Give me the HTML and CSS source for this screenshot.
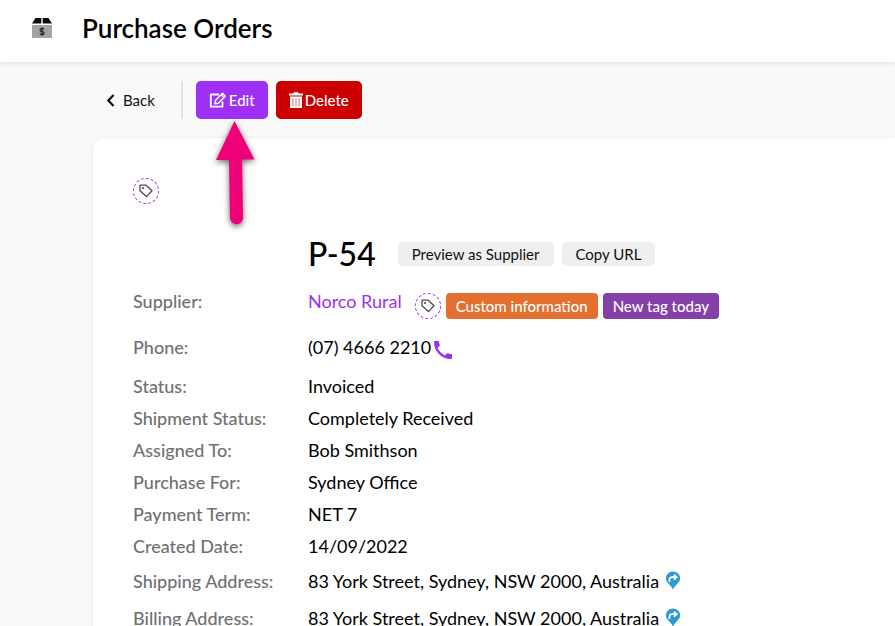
FILE: index.html
```html
<!DOCTYPE html>
<html lang="en">
<head>
<meta charset="utf-8">
<title>Purchase Orders</title>
<link rel="stylesheet" href="styles.css">
</head>
<body>
<svg class="defs" aria-hidden="true">
  <symbol id="tag" viewBox="0 0 14 14">
    <path d="M1 1.2h6.2l5.8 5.6-5.5 5.8L1 6.8z" fill="none" stroke="#4a4a55" stroke-width="1.3" stroke-linejoin="round"/>
    <circle cx="4" cy="4" r="1.1" fill="#4a4a55"/>
  </symbol>
  <symbol id="pin" viewBox="0 0 16 20">
    <path d="M8 .5a7.5 7.5 0 0 1 7.5 7.500c0 4-4.500 6-7.500 11.500C5 14 .5 12 .5 8A7.500 7.500 0 0 1 8 .5z" fill="#2f9ad2"/>
    <path d="M4.200 11.500V9.500Q4.200 6.500 7 6.500h4M9 3.800l2.900 2.700L9 9.200" fill="none" stroke="#fff" stroke-width="1.8"/>
  </symbol>
</svg>

<header class="topbar">
  <svg class="box-icon" viewBox="0 0 20 20" aria-hidden="true">
    <path d="M3.500 0H9.300V5.500H0zM10.700 0H16.500L20 5.500H10.700z" fill="#0b0b0b"/>
    <path d="M0 7h20v13H0z" fill="#a3a3a3"/>
    <path d="M12 11.500Q11.500 10.500 10 10.500 8 10.500 8 12t2 1.500 2 1.600-2 1.500q-1.600 0-2.100-1.100M10 9.300v8.500" fill="none" stroke="#161616" stroke-width="1.1"/>
  </svg>
  <h1 class="title">Purchase Orders</h1>
</header>

<main class="content">
  <nav class="toolbar">
    <a class="back" href="#">
      <svg class="chevron" viewBox="0 0 8 12" aria-hidden="true"><path d="M6.800 1L2 6l4.800 5" fill="none" stroke="#111" stroke-width="2"/></svg>
      Back
    </a>
    <button class="btn edit" type="button">
      <svg class="edit-icon" viewBox="0 0 18 16" aria-hidden="true">
        <path d="M10 2.500H1.800v12.200h11.700V9.500" fill="none" stroke="#fff" stroke-width="1.800" stroke-linejoin="round"/>
        <path d="M6.400 8.500L13.500 1.400l2.800 2.800-7.100 7.100-3.300.5z" fill="none" stroke="#fff" stroke-width="1.500" stroke-linejoin="round"/>
        <path d="M12.200 2.800l2.800 2.800" stroke="#fff" stroke-width="1.300"/>
      </svg>
      Edit
    </button>
    <button class="btn delete" type="button">
      <svg class="trash-icon" viewBox="0 0 14 16" aria-hidden="true">
        <path d="M4.500 1.500V.3h5v1.200H14v2H0v-2zM1 4.500h12V16H1z" fill="#fff"/>
        <path d="M4 6.500v7.500M7 6.500v7.500M10 6.500v7.500" stroke="#e06666" stroke-width="1"/>
      </svg>
      Delete
    </button>
    <svg class="arrow" viewBox="0 0 40 106" aria-hidden="true">
      <path d="M19.500 0L39.500 38.500H27L28 96.500a6.500 6.500 0 0 1-13 .5L14 39H1z" fill="#f00078"/>
    </svg>
  </nav>

  <section class="card">
    <button class="tag-add" type="button" aria-label="Add tag"><svg class="tag-icon"><use href="#tag"/></svg></button>
    <div class="heading">
      <h2 class="number">P-54</h2>
      <button class="small-btn" type="button">Preview as Supplier</button>
      <button class="small-btn" type="button">Copy URL</button>
    </div>
    <dl class="details">
      <div class="row supplier">
        <dt>Supplier:</dt>
        <dd>
          <a class="link" href="#">Norco Rural</a>
          <span class="tags">
            <button class="tag-add" type="button" aria-label="Add supplier tag"><svg class="tag-icon"><use href="#tag"/></svg></button>
            <span class="tag orange">Custom information</span>
            <span class="tag purple">New tag today</span>
          </span>
        </dd>
      </div>
      <div class="row phone">
        <dt>Phone:</dt>
        <dd>(07) 4666 2210
          <a class="call" href="#" aria-label="Call"><svg class="phone-icon" viewBox="0 0 18 18" aria-hidden="true"><path d="M1 0h3.200q.8 0 .9.900.1 1.700.7 3.200.2.600-.2 1L3.500 7.200q2.400 4.800 7.300 7.300l2.100-2.100q.4-.4 1-.2 1.500.6 3.200.7.900.1.900.9V17q0 1-1 1C7.500 18 0 10.500 0 1q0-1 1-1z" fill="#9b30f5"/></svg></a>
        </dd>
      </div>
      <div class="row"><dt>Status:</dt><dd>Invoiced</dd></div>
      <div class="row"><dt>Shipment Status:</dt><dd>Completely Received</dd></div>
      <div class="row"><dt>Assigned To:</dt><dd>Bob Smithson</dd></div>
      <div class="row"><dt>Purchase For:</dt><dd>Sydney Office</dd></div>
      <div class="row"><dt>Payment Term:</dt><dd>NET 7</dd></div>
      <div class="row"><dt>Created Date:</dt><dd>14/09/2022</dd></div>
      <div class="row address"><dt>Shipping Address:</dt><dd>83 York Street, Sydney, NSW 2000, Australia <a class="map" href="#" aria-label="Shipping directions"><svg class="pin-icon"><use href="#pin"/></svg></a></dd></div>
      <div class="row address"><dt>Billing Address:</dt><dd>83 York Street, Sydney, NSW 2000, Australia <a class="map" href="#" aria-label="Billing directions"><svg class="pin-icon"><use href="#pin"/></svg></a></dd></div>
    </dl>
  </section>
</main>
</body>
</html>
```
FILE: styles.css
```css
* { box-sizing: border-box; }
html { overflow: hidden; }
body {
  margin: 0;
  background: #f9f9f9;
  color: #111;
  font-family: Lato, "Liberation Sans", sans-serif;
  font-size: 18px;
  line-height: 24px;
}
button { font: inherit; border: 0; cursor: pointer; }
a { color: inherit; text-decoration: none; }
svg { display: block; flex: none; }
.defs { position: absolute; width: 0; height: 0; }

.topbar {
  display: flex;
  align-items: center;
  gap: 30px;
  padding: 12px 32px 18px;
  background: #fff;
  box-shadow: 0 1px 6px #dcdce4;
}
.box-icon { width: 20px; height: 20px; }
.title { margin: 0; font-size: 26px; line-height: 32px; font-weight: 600; color: #000; }

.content { padding: 19px 0 0 93px; }
.toolbar { position: relative; display: flex; align-items: center; gap: 8px; }
.back {
  display: flex;
  align-items: center;
  gap: 8px;
  height: 38px;
  padding: 0 26px 0 13px;
  margin-right: 5px;
  border-right: 2px solid #e2e2e2;
  font-size: 15px;
}
.chevron { width: 9px; height: 13px; }
.btn {
  display: flex;
  align-items: center;
  gap: 2px;
  height: 38px;
  padding: 0 13px;
  border-radius: 5px;
  color: #fff;
  font-size: 15px;
  font-weight: 500;
}
.edit { background: #9f2ff5; }
.delete { background: #cc0000; }
.edit-icon { width: 18px; height: 16px; }
.trash-icon { width: 14px; height: 16px; }
.arrow {
  position: absolute;
  left: 122px;
  top: 40px;
  z-index: 1;
  width: 40px;
  height: 106px;
  filter: drop-shadow(0 2px 3px rgba(0, 0, 0, .6));
}

.card {
  margin-top: 19px;
  padding: 40px;
  background: #fff;
  border-radius: 10px 0 0 0;
  box-shadow: 0 0 3px #e4e4e4;
}
.tag-add {
  display: flex;
  align-items: center;
  justify-content: center;
  width: 26px;
  height: 26px;
  padding: 0;
  border: 1px dashed #9b30f5;
  border-radius: 50%;
  background: none;
}
.tag-icon { width: 14px; height: 14px; }
.heading { display: flex; align-items: center; gap: 8px; margin: 28px 0 9px 175px; }
.number { margin: 0 14px 0 0; font-size: 32px; line-height: 44px; font-weight: 500; color: #000; }
.small-btn {
  height: 24px;
  padding: 0 14px;
  border-radius: 5px;
  background: #efefef;
  color: #111;
  font-size: 15px;
}

.details { margin: 0; }
.row { display: grid; grid-template-columns: 175px 1fr; align-items: center; height: 32px; }
.row dt { color: #6f7074; font-weight: 500; }
.row dd { display: flex; align-items: center; margin: 0; white-space: nowrap; color: #000; }
.supplier { align-items: start; height: 39px; padding-top: 4px; }
.supplier dd { align-items: flex-start; gap: 13px; }
.phone { height: 46px; }
.address { height: 37px; }
.link { color: #9b30f5; }
.tags { display: flex; align-items: center; gap: 5px; padding-top: 4px; }
.tag { padding: 1px 10px; border-radius: 4px; color: #fff; font-size: 15px; font-weight: 500; }
.orange { background: #e37030; }
.purple { background: #8340a8; }
.call { padding: 6px 0 0 3px; }
.phone-icon { width: 18px; height: 18px; }
.map { padding-left: 6px; }
.pin-icon { width: 16px; height: 19px; }
```
